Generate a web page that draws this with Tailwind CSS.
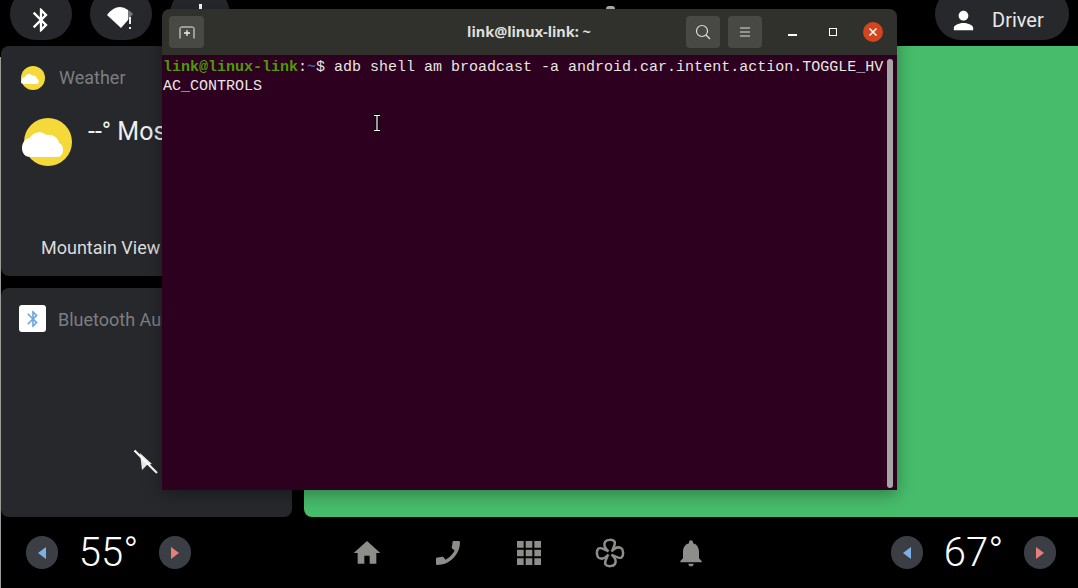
<!DOCTYPE html>
<html lang="en">
<head>
  <meta charset="UTF-8">
  <title>Car launcher with terminal</title>
  <script src="https://cdn.jsdelivr.net/npm/@tailwindcss/browser@4"></script>
</head>
<body class="bg-black">
  <div class="relative w-[1078px] h-[588px] overflow-hidden bg-black font-['Roboto',sans-serif] flex flex-col">
    <!-- status bar -->
    <header class="h-[46px] flex items-start justify-between pl-[10px] pr-[9px]">
      <div class="flex gap-[18px]">
        <div class="w-[62px] h-[52px] -mt-[12px] pt-[12px] rounded-full bg-[#26282c] flex items-center justify-center">
          <svg class="w-[28px] h-[28px]" viewBox="0 0 24 24" fill="#fff"><path d="M17.71 7.71L12 2h-1v7.59L6.41 5 5 6.41 10.59 12 5 17.59 6.41 19 11 14.41V22h1l5.71-5.71-4.3-4.29 4.3-4.29zM13 5.83l1.88 1.88L13 9.59V5.83zm1.88 10.46L13 18.17v-3.76l1.88 1.88z"/></svg>
        </div>
        <div class="w-[62px] h-[52px] -mt-[12px] pt-[12px] rounded-full bg-[#26282c] flex items-center justify-center">
          <svg class="w-[30px] h-[26px]" viewBox="0 0 30 26"><path d="M1 8Q7 0 14 0Q18 0 22 3V13L15 21Z" fill="#fff"/><path d="M22 3Q25 4.500 27 7L22 13Z" fill="#77787a"/><rect x="23" y="10" width="2" height="7" fill="#eee"/><rect x="23" y="20" width="2" height="2" fill="#eee"/></svg>
        </div>
        <div class="w-[60px] h-[52px] -mt-[12px] pt-[16px] rounded-full bg-[#26282c] flex justify-center">
          <div class="w-[3px] h-[6px] bg-white"></div>
        </div>
      </div>
      <div class="w-[134px] h-[52px] -mt-[12px] pt-[12px] rounded-full bg-[#26282c] flex items-center pl-[14px] gap-[14px]">
        <svg class="w-[29px] h-[29px]" viewBox="0 0 24 24" fill="#fff"><path d="M12 12c2.210 0 4-1.790 4-4s-1.790-4-4-4-4 1.790-4 4 1.790 4 4 4zm0 2c-2.670 0-8 1.340-8 4v2h16v-2c0-2.660-5.330-4-8-4z"/></svg>
        <span class="text-[20px] text-[#e8e8e8]">Driver</span>
      </div>
    </header>

    <!-- cards -->
    <main class="h-[471px] flex gap-[12px] pl-[1px]">
      <div class="w-[291px] flex flex-col gap-[12px]">
        <section class="h-[230px] rounded-[8px] bg-[#26282c] overflow-hidden flex flex-col">
          <div class="flex items-center gap-[13px] pl-[19px] pt-[18px]">
            <svg class="w-[26px] h-[26px]" viewBox="0 0 26 26"><circle cx="13" cy="13" r="12" fill="#f5d93a"/><path d="M1 17c0-3 2-5 4-5 1-3 5-4 7-1.500 3-.5 5 1.500 5 3.500 1.500.5 2 2 1.500 3.500-.5 1-1 1.500-2 1.500H4c-2 0-3-1-3-2z" fill="#fff"/></svg>
            <span class="text-[18px] text-[#7c7e82]">Weather</span>
          </div>
          <div class="flex items-start pl-[21px] pt-[26px] gap-[16px]">
            <svg class="w-[50px] h-[50px]" viewBox="0 0 50 50"><circle cx="26" cy="25" r="24" fill="#f5d93a"/><path d="M0 31c0-6 4-10 8-10 2-6 12-8 16-3 6-1 12 2 13 8 3 1 4 4 4 7 0 4-2 7-6 7H8c-5 0-8-4-8-9z" fill="#fff"/></svg>
            <span class="text-[25px] leading-[32px] text-[#f0f0f0] whitespace-nowrap -mt-[1px]">--° Mostly Cloudy</span>
          </div>
          <div class="pl-[40px] pt-[67px] text-[18px] text-[#dcdcdc]">Mountain View</div>
        </section>
        <section class="h-[229px] rounded-[8px] bg-[#26282c] relative flex flex-col">
          <div class="flex items-center gap-[12px] pl-[18px] pt-[17px]">
            <div class="w-[27px] h-[27px] rounded-[3px] bg-white flex items-center justify-center">
              <svg class="w-[20px] h-[20px]" viewBox="0 0 24 24" fill="#6fa8dc"><path d="M17.710 7.710L12 2h-1v7.590L6.410 5 5 6.410 10.590 12 5 17.590 6.410 19 11 14.410V22h1l5.710-5.710-4.300-4.290 4.300-4.290zM13 5.830l1.880 1.880L13 9.590V5.830zm1.880 10.460L13 18.170v-3.760l1.880 1.880z"/></svg>
            </div>
            <span class="text-[18px] text-[#7c7e82] whitespace-nowrap relative top-[1px]">Bluetooth Audio</span>
          </div>
          <!-- pointer, crossed out -->
          <svg class="absolute left-[133px] top-[160px] w-[26px] h-[26px]" viewBox="0 0 26 26"><path d="M6 5L8 22L13 17L18 16Z" fill="#e8e8e8"/><path d="M11 5L20 12" stroke="#26282c" stroke-width="2"/><path d="M.5 2.500L23 25" stroke="#fff" stroke-width="2.200"/></svg>
        </section>
      </div>
      <section class="flex-1 rounded-l-[8px] bg-[#47bd6b]"></section>
    </main>

    <!-- hvac and nav bar -->
    <footer class="flex-1 flex items-center pl-[26px] pr-[22px]">
      <div class="flex items-center">
        <div class="w-[32px] h-[33px] rounded-full bg-[#3b3f45] flex items-center justify-center">
          <div class="w-0 h-0 border-y-[6px] border-y-transparent border-r-[8px] border-r-[#7eb0e6]"></div>
        </div>
        <span class="w-[101px] text-center text-[40px] leading-none font-light text-white">55°</span>
        <div class="w-[32px] h-[33px] rounded-full bg-[#3b3f45] flex items-center justify-center">
          <div class="w-0 h-0 border-y-[6px] border-y-transparent border-l-[8px] border-l-[#e57f78]"></div>
        </div>
      </div>
      <nav class="ml-[160px] flex items-center gap-[49px] text-[#8d8e89]">
        <svg class="w-[32px] h-[32px]" viewBox="0 0 24 24" fill="currentColor"><path d="M10 20v-6h4v6h5v-8h3L12 3 2 12h3v8z"/></svg>
        <svg class="w-[32px] h-[32px] -scale-x-100" viewBox="0 0 24 24" fill="currentColor"><path d="M20.010 15.380c-1.230 0-2.420-.2-3.530-.56-.35-.12-.74-.03-1.010.24l-1.570 1.970c-2.830-1.350-5.480-3.900-6.890-6.830l1.950-1.660c.27-.28.35-.67.24-1.020-.37-1.110-.56-2.300-.56-3.530 0-.54-.45-.99-.99-.99H4.190C3.650 3 3 3.240 3 3.990 3 13.280 10.730 21 20.010 21c.71 0 .99-.63.99-1.180v-3.450c0-.54-.45-.99-.99-.99z"/></svg>
        <svg class="w-[32px] h-[32px]" viewBox="0 0 24 24" fill="currentColor"><path d="M3 3h5v5H3zM9.500 3h5v5h-5zM16 3h5v5h-5zM3 9.500h5v5H3zM9.500 9.500h5v5h-5zM16 9.500h5v5h-5zM3 16h5v5H3zM9.500 16h5v5h-5zM16 16h5v5h-5z"/></svg>
        <svg class="w-[32px] h-[32px]" viewBox="0 0 32 32" fill="none" stroke="currentColor" stroke-width="2.500"><path d="M14.500 14.500C11 11.500 9.500 8 11 5C12.500 2.500 18.500 2 20.500 4.500C22 7 19.500 9.500 18.500 13.500"/><path transform="rotate(90 16 16)" d="M14.500 14.500C11 11.500 9.500 8 11 5C12.500 2.500 18.500 2 20.500 4.500C22 7 19.500 9.500 18.500 13.500"/><path transform="rotate(180 16 16)" d="M14.500 14.500C11 11.500 9.500 8 11 5C12.500 2.500 18.500 2 20.500 4.500C22 7 19.500 9.500 18.500 13.500"/><path transform="rotate(270 16 16)" d="M14.500 14.500C11 11.500 9.500 8 11 5C12.500 2.500 18.500 2 20.500 4.500C22 7 19.500 9.500 18.500 13.500"/></svg>
        <svg class="w-[32px] h-[32px]" viewBox="0 0 24 24" fill="currentColor"><path d="M12 22c1.100 0 2-.9 2-2h-4c0 1.100.89 2 2 2zm6-6v-5c0-3.070-1.640-5.640-4.500-6.320V4c0-.83-.67-1.500-1.500-1.500s-1.500.67-1.500 1.500v.68C7.630 5.360 6 7.920 6 11v5l-2 2v1h16v-1l-2-2z"/></svg>
      </nav>
      <div class="ml-auto flex items-center">
        <div class="w-[32px] h-[33px] rounded-full bg-[#3b3f45] flex items-center justify-center">
          <div class="w-0 h-0 border-y-[6px] border-y-transparent border-r-[8px] border-r-[#7eb0e6]"></div>
        </div>
        <span class="w-[101px] text-center text-[40px] leading-none font-light text-white">67°</span>
        <div class="w-[32px] h-[33px] rounded-full bg-[#3b3f45] flex items-center justify-center">
          <div class="w-0 h-0 border-y-[6px] border-y-transparent border-l-[8px] border-l-[#e57f78]"></div>
        </div>
      </div>
    </footer>

    <!-- thin edge line and the speck of a status item showing above the window -->
    <div class="absolute left-0 top-[57px] bottom-0 w-px bg-[#9a9a9a]"></div>
    <div class="absolute left-[606px] top-[6px] w-[9px] h-[3px] rounded-t-full bg-[#b8b8b8]"></div>

    <!-- terminal window floating on top -->
    <div class="absolute left-[162px] top-[9px] w-[735px] h-[481px] rounded-t-[8px] overflow-hidden bg-[#2c001e] shadow-[0_4px_18px_rgba(0,0,0,0.35)] flex flex-col">
      <div class="h-[46px] shrink-0 bg-[#30312c] flex items-center pl-[7px] pr-[14px] relative">
        <button class="w-[35px] h-[32px] rounded-[4px] bg-[#484845] flex items-center justify-center">
          <svg class="w-[16px] h-[13px]" viewBox="0 0 16 13" fill="none" stroke="#eee" stroke-width="1"><path d="M1 12.500V2.500Q1 1 2.500 1h11Q15 1 15 2.500V12.500"/><path d="M8 4v6M5 7h6" stroke-width="1.300"/></svg>
        </button>
        <span class="absolute left-0 right-0 text-center text-[14.500px] font-bold text-[#dfdfdb] font-['Noto_Sans',sans-serif] pointer-events-none -ml-[1px]">link@linux-link: ~</span>
        <div class="ml-auto flex items-center">
          <button class="w-[34px] h-[32px] rounded-[4px] bg-[#484845] flex items-center justify-center">
            <svg class="w-[16px] h-[16px]" viewBox="0 0 16 16" fill="none" stroke="#ddd" stroke-width="1.200"><circle cx="7" cy="7" r="5.500"/><path d="M11 11l4 4"/></svg>
          </button>
          <button class="ml-[8px] w-[34px] h-[32px] rounded-[4px] bg-[#484845] flex items-center justify-center">
            <svg class="w-[12px] h-[10px]" viewBox="0 0 12 10" stroke="#ddd" stroke-width="1"><path d="M1 1h10M1 5h10M1 9h10"/></svg>
          </button>
          <div class="ml-[26px] w-[9px] h-[2px] bg-white mt-[5px]"></div>
          <div class="ml-[32px] w-[8px] h-[8px] border border-white"></div>
          <div class="ml-[26px] w-[20px] h-[20px] rounded-full bg-[#d2451e] flex items-center justify-center">
            <svg class="w-[10px] h-[10px]" viewBox="0 0 10 10" stroke="#fff" stroke-width="1.500"><path d="M1.500 1.500l7 7M8.500 1.500l-7 7"/></svg>
          </div>
        </div>
      </div>
      <div class="relative flex-1 pl-[1px] pt-[3px] font-['Liberation_Mono',monospace] text-[15px] leading-[19px] text-[#e8e6e3]">
        <div class="whitespace-pre"><span class="font-bold text-[#4e9a06]">link@linux-link</span>:<span class="font-bold text-[#3465a4]">~</span>$ adb shell am broadcast -a android.car.intent.action.TOGGLE_HV</div>
        <div class="whitespace-pre">AC_CONTROLS</div>
        <!-- scrollbar -->
        <div class="absolute right-[4px] top-[4px] bottom-[2px] w-[6px] rounded-full bg-[#a8a5a7]"></div>
        <!-- text cursor -->
        <svg class="absolute left-[209px] top-[59px] w-[12px] h-[18px]" viewBox="0 0 12 18" fill="none"><path d="M3 1.500h6M3 16.500h6M6 1.500v15" stroke="#000" stroke-width="3"/><path d="M3 1.500h6M3 16.500h6M6 1.500v15" stroke="#fff" stroke-width="1.200"/></svg>
      </div>
    </div>
  </div>
</body>
</html>
